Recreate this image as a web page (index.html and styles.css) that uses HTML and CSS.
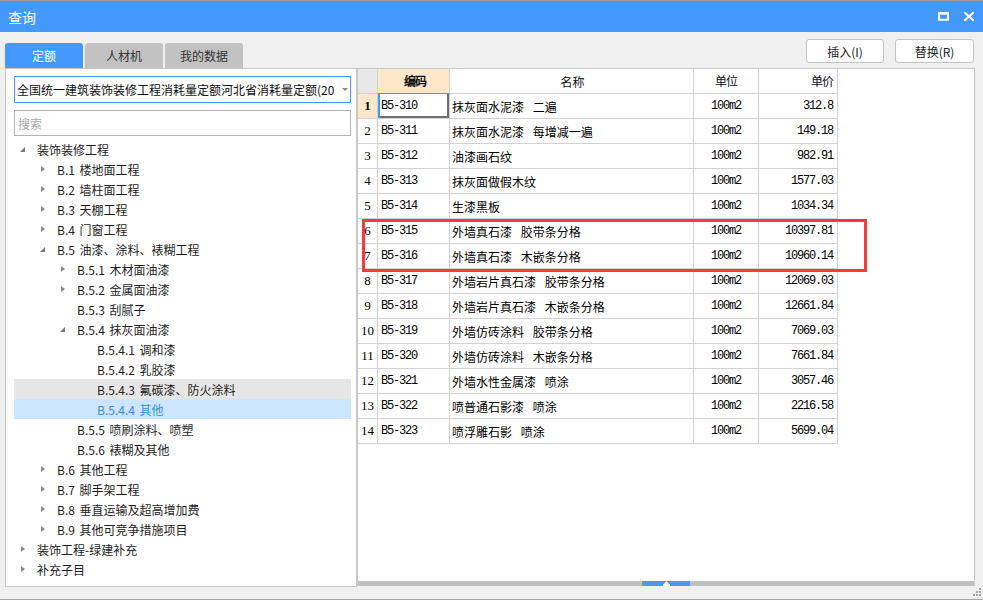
FILE: index.html
```html
<!DOCTYPE html>
<html lang="zh-CN">
<head>
<meta charset="utf-8">
<title>查询</title>
<link rel="stylesheet" href="styles.css">
</head>
<body>
<div class="window">
  <div class="titlebar">
    <span class="title">查询</span>
    <div class="controls">
      <svg class="ctl" width="11" height="9" viewBox="0 0 11 9"><rect x="1" y="1.25" width="9" height="6.5" fill="none" stroke="#fff" stroke-width="2"/><rect x="0" y="0" width="11" height="2.5" fill="#fff"/></svg>
      <svg class="ctl" width="10" height="9" viewBox="0 0 10 9"><path d="M1 1 L9 8 M9 1 L1 8" stroke="#fff" stroke-width="2.2" stroke-linecap="square"/></svg>
    </div>
  </div>

  <div class="toolbar">
    <div class="tabs">
      <div class="tab active">定额</div>
      <div class="tab">人材机</div>
      <div class="tab">我的数据</div>
    </div>
    <div class="actions">
      <button class="btn">插入(I)</button>
      <button class="btn wide">替换(R)</button>
    </div>
  </div>

  <div class="main">
    <div class="left">
      <div class="select">
        <span class="select-text">全国统一建筑装饰装修工程消耗量定额河北省消耗量定额(2012)</span>
        <span class="select-arrow"></span>
      </div>
      <div class="search">搜索</div>
      <div class="tree">
        <div class="node l0"><span class="tg open"></span><span class="lbl">装饰装修工程</span></div>
        <div class="node l1"><span class="tg closed"></span><span class="lbl">B.1 楼地面工程</span></div>
        <div class="node l1"><span class="tg closed"></span><span class="lbl">B.2 墙柱面工程</span></div>
        <div class="node l1"><span class="tg closed"></span><span class="lbl">B.3 天棚工程</span></div>
        <div class="node l1"><span class="tg closed"></span><span class="lbl">B.4 门窗工程</span></div>
        <div class="node l1"><span class="tg open"></span><span class="lbl">B.5 油漆、涂料、裱糊工程</span></div>
        <div class="node l2"><span class="tg closed"></span><span class="lbl">B.5.1 木材面油漆</span></div>
        <div class="node l2"><span class="tg closed"></span><span class="lbl">B.5.2 金属面油漆</span></div>
        <div class="node l2"><span class="tg"></span><span class="lbl">B.5.3 刮腻子</span></div>
        <div class="node l2"><span class="tg open"></span><span class="lbl">B.5.4 抹灰面油漆</span></div>
        <div class="node l3"><span class="tg"></span><span class="lbl">B.5.4.1 调和漆</span></div>
        <div class="node l3"><span class="tg"></span><span class="lbl">B.5.4.2 乳胶漆</span></div>
        <div class="node l3 hover"><span class="tg"></span><span class="lbl">B.5.4.3 氟碳漆、防火涂料</span></div>
        <div class="node l3 selected"><span class="tg"></span><span class="lbl">B.5.4.4 其他</span></div>
        <div class="node l2"><span class="tg"></span><span class="lbl">B.5.5 喷刷涂料、喷塑</span></div>
        <div class="node l2"><span class="tg"></span><span class="lbl">B.5.6 裱糊及其他</span></div>
        <div class="node l1"><span class="tg closed"></span><span class="lbl">B.6 其他工程</span></div>
        <div class="node l1"><span class="tg closed"></span><span class="lbl">B.7 脚手架工程</span></div>
        <div class="node l1"><span class="tg closed"></span><span class="lbl">B.8 垂直运输及超高增加费</span></div>
        <div class="node l1"><span class="tg closed"></span><span class="lbl">B.9 其他可竞争措施项目</span></div>
        <div class="node l0"><span class="tg closed"></span><span class="lbl">装饰工程-绿建补充</span></div>
        <div class="node l0"><span class="tg closed"></span><span class="lbl">补充子目</span></div>
      </div>
    </div>

    <div class="right">
      <div class="grid-area">
        <div class="row head">
          <div class="c num"></div>
          <div class="c code hl"><b>编码</b></div>
          <div class="c name">名称</div>
          <div class="c unit">单位</div>
          <div class="c price">单价</div>
        </div>
        <div class="row">
          <div class="c num cur">1</div>
          <div class="c code focus">B5-310</div>
          <div class="c name">抹灰面水泥漆 二遍</div>
          <div class="c unit">100m2</div>
          <div class="c price">312.8</div>
        </div>
        <div class="row"><div class="c num">2</div><div class="c code">B5-311</div><div class="c name">抹灰面水泥漆 每增减一遍</div><div class="c unit">100m2</div><div class="c price">149.18</div></div>
        <div class="row"><div class="c num">3</div><div class="c code">B5-312</div><div class="c name">油漆画石纹</div><div class="c unit">100m2</div><div class="c price">982.91</div></div>
        <div class="row"><div class="c num">4</div><div class="c code">B5-313</div><div class="c name">抹灰面做假木纹</div><div class="c unit">100m2</div><div class="c price">1577.03</div></div>
        <div class="row"><div class="c num">5</div><div class="c code">B5-314</div><div class="c name">生漆黑板</div><div class="c unit">100m2</div><div class="c price">1034.34</div></div>
        <div class="row"><div class="c num">6</div><div class="c code">B5-315</div><div class="c name">外墙真石漆 胶带条分格</div><div class="c unit">100m2</div><div class="c price">10397.81</div></div>
        <div class="row"><div class="c num">7</div><div class="c code">B5-316</div><div class="c name">外墙真石漆 木嵌条分格</div><div class="c unit">100m2</div><div class="c price">10960.14</div></div>
        <div class="row"><div class="c num">8</div><div class="c code">B5-317</div><div class="c name">外墙岩片真石漆 胶带条分格</div><div class="c unit">100m2</div><div class="c price">12069.03</div></div>
        <div class="row"><div class="c num">9</div><div class="c code">B5-318</div><div class="c name">外墙岩片真石漆 木嵌条分格</div><div class="c unit">100m2</div><div class="c price">12661.84</div></div>
        <div class="row"><div class="c num">10</div><div class="c code">B5-319</div><div class="c name">外墙仿砖涂料 胶带条分格</div><div class="c unit">100m2</div><div class="c price">7069.03</div></div>
        <div class="row"><div class="c num">11</div><div class="c code">B5-320</div><div class="c name">外墙仿砖涂料 木嵌条分格</div><div class="c unit">100m2</div><div class="c price">7661.84</div></div>
        <div class="row"><div class="c num">12</div><div class="c code">B5-321</div><div class="c name">外墙水性金属漆 喷涂</div><div class="c unit">100m2</div><div class="c price">3057.46</div></div>
        <div class="row"><div class="c num">13</div><div class="c code">B5-322</div><div class="c name">喷普通石影漆 喷涂</div><div class="c unit">100m2</div><div class="c price">2216.58</div></div>
        <div class="row"><div class="c num">14</div><div class="c code">B5-323</div><div class="c name">喷浮雕石影 喷涂</div><div class="c unit">100m2</div><div class="c price">5699.04</div></div>
        <div class="redbox"></div>
      </div>
      <div class="hscroll">
        <div class="thumb"><svg width="7" height="5" viewBox="0 0 7 5"><path d="M3.5 0 L6 3 L1 3 Z" fill="#fff"/><rect x="0" y="3" width="7" height="2" fill="#fff"/></svg></div>
      </div>
    </div>
  </div>

  <div class="footer">
    <svg class="grip" width="8" height="8" viewBox="0 0 8 8">
      <rect x="6" y="0" width="2" height="2" fill="#a8a8a8"/>
      <rect x="3" y="3" width="2" height="2" fill="#a8a8a8"/>
      <rect x="6" y="3" width="2" height="2" fill="#a8a8a8"/>
      <rect x="0" y="6" width="2" height="2" fill="#a8a8a8"/>
      <rect x="3" y="6" width="2" height="2" fill="#a8a8a8"/>
      <rect x="6" y="6" width="2" height="2" fill="#a8a8a8"/>
    </svg>
  </div>
</div>
</body>
</html>
```

FILE: styles.css
```css
html, body {
  margin: 0;
  padding: 0;
}
body {
  background: #f0f0f0;
  font-family: "Noto Sans CJK SC", "Microsoft YaHei", sans-serif;
  font-size: 12px;
  color: #222;
}
.window {
  width: 983px;
  height: 600px;
  box-sizing: border-box;
  border-top: 1px solid #9c9c9c;
  border-bottom: 1px solid #a4a4a4;
  display: flex;
  flex-direction: column;
  background: #f0f0f0;
}

/* title bar */
.titlebar {
  height: 31px;
  flex: none;
  background: #4499ff;
  display: flex;
  align-items: center;
  justify-content: space-between;
  padding: 0 9px 0 8px;
  color: #fff;
}
.title {
  font-size: 14px;
  line-height: 14px;
  margin-top: 1px;
}
.controls {
  display: flex;
  align-items: center;
  gap: 15px;
}
.ctl {
  display: block;
}

/* toolbar */
.toolbar {
  height: 36px;
  flex: none;
  display: flex;
  justify-content: space-between;
  padding: 0 9px 0 5px;
}
.tabs {
  display: flex;
  gap: 2px;
  align-self: flex-end;
}
.tab {
  width: 78px;
  height: 25px;
  display: flex;
  align-items: center;
  justify-content: center;
  background: #c2c2c2;
  color: #333;
  font-size: 12px;
  border-radius: 3px 3px 0 0;
}
.tab.active {
  background: #4499ff;
  color: #fff;
}
.actions {
  display: flex;
  gap: 11px;
  margin-top: 7px;
  align-self: flex-start;
}
.btn {
  width: 78px;
  height: 24px;
  box-sizing: border-box;
  border: 1px solid #c4c4c4;
  border-radius: 3px;
  background: #fff;
  font-family: "Noto Sans CJK SC", sans-serif;
  font-size: 12px;
  color: #222;
  padding: 0;
}
.btn.wide {
  width: 79px;
}

/* main */
.main {
  height: 519px;
  flex: none;
  display: flex;
  padding: 0 8px 0 5px;
}
.left {
  width: 352px;
  box-sizing: border-box;
  border: 1px solid #c8c8c8;
  background: #fff;
  padding: 7px 5px 0 8px;
}
.select {
  height: 27px;
  box-sizing: border-box;
  border: 1px solid #4499ff;
  display: flex;
  align-items: center;
  padding-left: 2px;
  position: relative;
}
.select-text {
  width: 318px;
  white-space: nowrap;
  overflow: hidden;
  color: #111;
  font-size: 12px;
}
.select-arrow {
  margin-left: 7px;
  width: 0;
  height: 0;
  border-left: 3px solid transparent;
  border-right: 3px solid transparent;
  border-top: 3px solid #888;
}
.search {
  margin-top: 7px;
  height: 26px;
  box-sizing: border-box;
  border: 1px solid #b4b4b4;
  display: flex;
  align-items: center;
  padding-left: 3px;
  color: #a8a8a8;
  font-size: 12px;
}
.tree {
  margin-top: 3px;
}
.node {
  height: 20px;
  display: flex;
  align-items: center;
  white-space: nowrap;
  color: #1e1e1e;
  font-size: 12px;
  word-spacing: 2px;
}
.node.l0 { padding-left: 3px; }
.node.l1 { padding-left: 23px; }
.node.l2 { padding-left: 43px; }
.node.l3 { padding-left: 63px; }
.node.hover { background: #e6e6e6; }
.node.selected { background: #cce6ff; color: #3a8ae8; }
.tg {
  width: 20px;
  height: 20px;
  flex: none;
  position: relative;
}
.tg.closed::before {
  content: "";
  position: absolute;
  left: 4px;
  top: 7px;
  border-left: 4px solid #888;
  border-top: 3.5px solid transparent;
  border-bottom: 3.5px solid transparent;
}
.tg.open::before {
  content: "";
  position: absolute;
  left: 3px;
  top: 8px;
  border-bottom: 5px solid #7a7a7a;
  border-left: 5px solid transparent;
}

/* right grid */
.right {
  width: 618px;
  height: 518px;
  box-sizing: border-box;
  border: 1px solid #c8c8c8;
  border-bottom: none;
  background: #fff;
  display: flex;
  flex-direction: column;
}
.grid-area {
  flex: 1;
  position: relative;
}
.row {
  display: grid;
  grid-template-columns: 20px 72px 244px 65px 79px;
  height: 25px;
}
.c {
  box-sizing: border-box;
  border-right: 1px solid #d2d2d2;
  border-bottom: 1px solid #d2d2d2;
  display: flex;
  align-items: center;
  white-space: nowrap;
  overflow: hidden;
  color: #000;
  font-size: 12px;
}
.head .c {
  justify-content: center;
  font-family: "Noto Sans CJK SC", sans-serif;
  font-size: 12px;
  color: #111;
  letter-spacing: 0;
}
.head .num {
  background: #e8e8e8;
}
.head .hl {
  background: #ffe7c9;
  border-bottom-color: #4499ff;
}
.c.num {
  font-family: "Liberation Serif", serif;
  font-size: 13px;
  justify-content: center;
}
.c.num.cur {
  background: #ffe7c9;
  font-weight: bold;
}
.c.code {
  font-family: "Liberation Mono", monospace;
  font-size: 12px;
  letter-spacing: -1.2px;
  padding-left: 3px;
}
.c.code.focus {
  box-shadow: inset 2px 0 0 #4499ff, inset 0 -2px 0 #6f6f6f, inset -2px 0 0 #6f6f6f;
}
.c.name {
  padding-left: 2px;
  word-spacing: 6px;
}
.c.unit {
  justify-content: center;
  font-family: "Liberation Mono", monospace;
  letter-spacing: -1.2px;
}
.c.price {
  justify-content: flex-end;
  padding-right: 4px;
  font-family: "Liberation Mono", monospace;
  letter-spacing: -1.2px;
}
.redbox {
  position: absolute;
  left: 4px;
  top: 150px;
  width: 505px;
  height: 53px;
  box-sizing: border-box;
  border: 3px solid #f53c3c;
}
.hscroll {
  height: 5px;
  flex: none;
  background: #c0c0c0;
  display: flex;
  justify-content: center;
}
.thumb {
  width: 48px;
  height: 5px;
  background: #4499ff;
  display: flex;
  justify-content: center;
  align-items: flex-start;
}
.thumb svg {
  display: block;
}

/* footer */
.footer {
  flex: 1;
  position: relative;
}
.grip {
  position: absolute;
  right: 2px;
  top: 1px;
}
```
